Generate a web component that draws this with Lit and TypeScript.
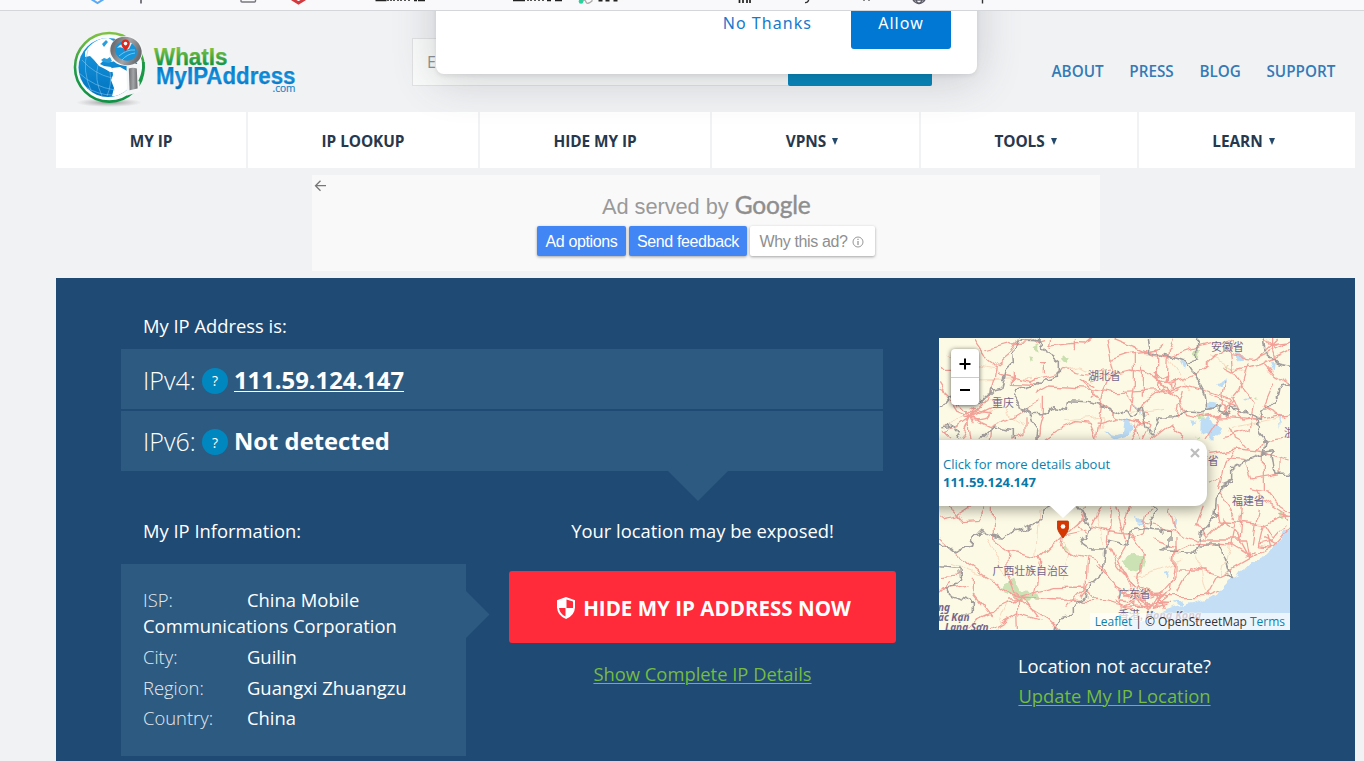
import { LitElement, html, svg, css } from "lit";
import { customElement } from "lit/decorators.js";

const sans = css`"Open Sans", "Noto Sans", sans-serif`;

@customElement("browser-strip")
class BrowserStrip extends LitElement {
  static styles = css`
    :host { display: block; height: 10px; background: #f9f9fb; border-bottom: 1px solid #d5d6d9; position: relative; z-index: 5; }
    svg { display: block; }
  `;
  render() {
    return html`<svg width="1364" height="10" viewBox="0 0 1364 10" fill="none">
      <path d="M91-1l6.500 4 6.500-4" stroke="#5aa9f5" stroke-width="2" />
      <path d="M141 0v3.500" stroke="#5b5b66" stroke-width="1.600" />
      <path d="M241-3v4q0 1 1 1h12.500q1 0 1-1v-4" stroke="#77777f" stroke-width="1.400" />
      <path d="M292-1l6.500 4 6.500-4" stroke="#d23a3f" stroke-width="3" />
      <path d="M375.500 .5h11M388 0v1m3-1v1m3-1v1m4-1v1m3-1v1m4-1v1m4-1v1M414 .5h3m1 0h7" stroke="#222" stroke-width="1.500" />
      <path d="M513 .5h12M528 0v1m3-1v1m4-1v1m4-1v1m4-1v1M547 .5h4m4 0h7" stroke="#222" stroke-width="1.500" />
      <circle cx="581" cy="1.500" r="2.300" fill="#23d59b" />
      <path d="M583 1q2-2 3 1t6-1V-1" stroke="#aaa" stroke-width="1.300" />
      <path d="M598.500 .5h4m3 0h4m4 0h4" stroke="#222" stroke-width="1.800" />
      <path d="M739.500 0v3M743 0v3M747 0v3M750 0v3" stroke="#222" stroke-width="1.700" />
      <path d="M809-1q-1 4-4 3.500" stroke="#333" stroke-width="1.300" />
      <path d="M864 0v1m5-1v1" stroke="#444" stroke-width="1.200" />
      <g stroke="#5b5b66" stroke-width="1.400"><circle cx="919" cy="-3" r="6.500" /><ellipse cx="919" cy="-3" rx="3" ry="6.500" /><path d="M913 0h12" /></g>
      <path d="M982.500 0v3.500" stroke="#333" stroke-width="1.400" />
    </svg>`;
  }
}

@customElement("site-logo")
class SiteLogo extends LitElement {
  static styles = css`:host { display: block; } svg { display: block; }`;
  render() {
    return html`<svg width="230" height="80" viewBox="70 28 230 80">
      <defs>
        <linearGradient id="g" x2="0" y2="1"><stop stop-color="#7fc241" /><stop offset=".55" stop-color="#1f9a48" /><stop offset="1" stop-color="#0d9444" /></linearGradient>
        <linearGradient id="b" x2="0" y2="1"><stop stop-color="#1c9be0" /><stop offset="1" stop-color="#0073c0" /></linearGradient>
        <linearGradient id="tg" gradientUnits="userSpaceOnUse" x1="0" x2="0" y1="47" y2="65"><stop stop-color="#85c441" /><stop offset="1" stop-color="#109447" /></linearGradient>
        <linearGradient id="tb" gradientUnits="userSpaceOnUse" x1="0" x2="0" y1="66" y2="88"><stop stop-color="#0078c4" /><stop offset=".55" stop-color="#1590dc" /><stop offset="1" stop-color="#006bb8" /></linearGradient>
        <linearGradient id="m"><stop stop-color="#6e7073" /><stop offset=".5" stop-color="#a3a5a8" /><stop offset="1" stop-color="#6b6d70" /></linearGradient>
        <radialGradient id="s"><stop stop-color="#777" stop-opacity=".75" /><stop offset="1" stop-color="#999" stop-opacity="0" /></radialGradient>
        <clipPath id="c"><circle cx="108" cy="67.500" r="29.500" /></clipPath>
      </defs>
      <ellipse cx="109" cy="102.500" rx="33" ry="4.500" fill="url(#s)" />
      <circle cx="109.300" cy="67.300" r="34.300" fill="#f8fafb" stroke="url(#g)" stroke-width="2.600" />
      <circle cx="108" cy="67.500" r="29.500" fill="url(#b)" />
      <g clip-path="url(#c)">
        <path d="M85 52q7-12 22-15l8 5-2 12 2 7-4 1-8-1-3 3 4 2 7 1 3 5-4 0-5-3-6-3-5-6-4-4-5 1z" fill="#fff" />
        <path d="M112 68l8-1 7 4 8 2v14l-12 7-8 3-3-1 2-8-3-8 2-5z" fill="#fff" />
        <path d="M102 44l4-4 2 2-4 5zM101 60l3-2 3 1 3-2 2 4-3 2-5-1z" fill="#2a9ddd" />
        <g fill="none" stroke="#85c8ef" stroke-width=".7" opacity=".8"><path d="M79 73q15 14 36 17M82 60q12 14 30 18M84 86q14 9 28 9M88 50q-7 20 4 43M98 65q-4 14 4 31M110 72q2 12-3 24" /></g>
      </g>
      <path d="M126.500 64h13.500l-.5 21.500 1.500 6-14 4z" fill="#f3f5f7" />
      <path d="M143.500 62q.6 10-4 19.500" fill="none" stroke="#199847" stroke-width="2.600" />
      <ellipse cx="126" cy="51" rx="17" ry="15" fill="#f4f6f7" />
      <ellipse cx="126" cy="51" rx="13.600" ry="11.700" transform="rotate(20 126 51)" fill="#1594da" stroke="url(#m)" stroke-width="4.600" />
      <path d="M117 48q6-7 15-5l-3 6-4 1q-3-4-8-2z" fill="#d7eefb" />
      <path d="M119 56q8-7 16-6M122 60q5-6 13-7" fill="none" stroke="#8ed0f4" stroke-width=".8" />
      <path d="M128.800 68.500q4-1.500 8 0l.8 20-8 1.800z" fill="url(#m)" />
      <path d="M125.500 51.500q-4.300-5.500-4.300-7.700a4.300 4.300 0 018.600 0q0 2.200-4.300 7.700z" fill="#dc2a1f" /><circle cx="125.500" cy="43.600" r="1.800" fill="#fff" />
      <g font-family="Liberation Sans, Arial, sans-serif" font-weight="700" stroke-width=".25" stroke-linejoin="round">
        <text x="154" y="65" font-size="23" textLength="73.500" lengthAdjust="spacingAndGlyphs" fill="url(#tg)" stroke="url(#tg)">WhatIs</text>
        <text x="156" y="83.700" font-size="23" textLength="139.500" lengthAdjust="spacingAndGlyphs" fill="url(#tb)" stroke="url(#tb)">MyIPAddress</text>
      </g>
      <text x="272.500" y="92" font-family="Open Sans, sans-serif" font-size="10.500" textLength="23" lengthAdjust="spacingAndGlyphs" fill="#1585c9" stroke="#1585c9" stroke-width=".2">.com</text>
    </svg>`;
  }
}

@customElement("area-map")
class AreaMap extends LitElement {
  static styles = css`
    :host { display: block; position: relative; width: 351px; height: 292px; overflow: hidden; background: #fcfae4; font-family: ${sans}; }
    .tiles { display: block; }
    .zoom { position: absolute; left: 12px; top: 11px; width: 28px; border-radius: 4px; background: #fff; box-shadow: 0 1px 5px rgba(0,0,0,.65); }
    .zoom span { display: flex; align-items: center; justify-content: center; height: 28px; padding-top: 1px; box-sizing: border-box; }
    .zoom span + span { height: 28px; padding: 0 0 3px; border-top: 1px solid #ccc; }
    .pop { position: absolute; left: -16px; top: 102px; width: 284px; height: 66px; box-sizing: border-box; padding: 14.500px 20px 0; border-radius: 12px; background: #fff; box-shadow: 0 3px 14px rgba(0,0,0,.4); color: #0b7fae; font-size: 13px; line-height: 18px; letter-spacing: .01px; }
    .pop b { display: block; color: #0679aa; letter-spacing: 0; }
    .tip { position: absolute; left: 107px; top: 167px; }
    .x { position: absolute; left: 251px; top: 110px; }
    .pin { position: absolute; left: 117px; top: 182px; }
    .credit { position: absolute; right: 0; bottom: 0; height: 17px; width: 200px; box-sizing: border-box; text-align: right; padding-right: 5px; background: rgba(255,255,255,.7); font-size: 12px; line-height: 17px; letter-spacing: -.02px; color: #333; white-space: nowrap; }
    .credit i { font-style: normal; color: #0d80ac; }
  `;
  render() {
    const topRoads = [
      "M28 118H60M130 25L166 80 196 105 190 150 172 215 122 262M200 102L240 68 262 25M168 60L240 40M196 120L208 128M200 130L300 155 380 132 400 118 470 132 540 120",
      "M345 25L300 38 240 42M355 50L420 40 470 42 490 25M528 25L540 90 548 125 520 190 510 255 500 320M548 25L660 70 720 78 800 52 905 25M538 92L610 68 680 60 702 40M610 68V170L600 245",
      "M480 150L600 120 650 128 698 170 M320 190L360 168 480 175 560 188 690 182 760 160 830 180 900 205M340 200V250L322 330M480 175L520 225 560 260 620 275 660 275M680 80V150L700 170 M675 60L685 160",
      "M735 25L715 65 712 150M700 170L740 200 765 250 820 262M700 170L640 215 620 250M712 160L800 130 880 60 905 25M910 25L905 80 912 128 945 180 975 215 960 300 880 322M880 108L912 125 1000 100 1082 58",
      "M905 80L970 88 1080 35M1025 25V60L1040 100M1000 25L1020 48 985 80M1025 45L1080 38M900 205L850 290 825 330M905 200L935 270 1010 262 1080 250M885 150L870 220 900 260 985 268M820 262L880 255M820 262L900 260",
      "M28 160L80 245 122 262 180 290 255 255 330 210M50 185L110 245 120 330M122 262L70 300 28 310M122 262L90 330M122 262L190 230 180 210M125 240L186 250M130 270Q188 270 180 245M285 262V310L250 325M80 230L70 200 28 180",
      "M345 325L380 300 440 275 480 280 500 330M500 280L560 262M600 330L640 270 660 285 640 330M620 280L630 330M660 330L720 285 765 325M835 370L920 360 985 365 1000 330 1080 320M865 480L885 400 915 365M870 440L840 460M890 380L940 385 960 450 1050 435M900 290L910 330 960 360M1000 370V480M985 365L1082 390M1050 380V435",
      "M700 170m-18 0a18 14 0 1036 0a18 14 0 10-36 0M690 150l-15-15 20 10 18-10-5 20 25-5-10 18 22 5-28 8",
      "M110 240l20 40M95 260l50 10M138 238l-30 40M105 250h40M480 175l-30-28 40 20M490 180l-10 20M1010 30l25 25M1010 60l30-30M1012 45h30",
      "M330 98H345M340 98V130M430 25V55M250 120V160L330 165M365 25L360 60M955 100L930 180 880 240M1000 100L1035 140 1080 165M760 180L740 260M580 180L620 240 660 250M28 300L60 330M180 290L175 330M640 110V200M1030 160L1000 230 1060 260M840 190L915 230",
    ];
    const lowRoads = [
      "M28 115L80 105 120 80M60 78L100 122 150 118 170 80M28 180L120 255 220 330 262 350M190 80L190 180 235 212 230 260 262 350M235 212L330 232 400 165 470 100M330 232L335 250 310 350M400 165L395 200 440 225 500 240 540 300",
      "M400 165L470 150M470 235L465 320 410 380M262 350L380 360 520 362 600 378 660 380M262 360L150 410 120 450M262 360L265 450M262 360L350 415 390 450M262 350L370 320 465 318 500 355M220 330L280 355 320 410M180 450L265 400 330 420",
      "M515 80L485 140 520 150 600 160 640 220 625 320 660 380M545 80L535 190 560 250 615 325M560 80L590 180 560 230 610 325M600 80L580 150M660 80L640 160 600 175M670 180L735 200 735 290 690 340M500 255L560 320 660 380M570 260L600 320",
      "M640 130L720 150 800 180 950 180 960 235M735 220L720 330 690 350M735 165L735 220L800 190 910 195 960 225M600 325L570 350 580 380M620 320L710 350 820 350 870 330M830 345L860 290 900 270 970 230 1030 200 1082 145M740 270H830M740 335L780 260 865 285",
      "M720 80L735 150M820 80L800 130 830 175M860 78L870 120 1000 135 1070 105M880 110L920 160 960 235M940 80L930 180M985 85L970 190M1000 135L985 200 1020 205M1000 130L1030 180 1060 145M1045 100L1082 110M860 30L920 120 905 200M980 25L1000 60 1070 105M880 120L830 170M960 20L1010 30 1050 80 1082 100",
      "M585 345L700 335M575 360L720 370M590 375L700 330M620 320L610 380M640 320L655 395M570 330L650 385 710 340M700 330L670 385 710 375M680 340l20 50M690 335l-35 55M560 360l50 30M600 340L690 385M720 345l-40 30 30-5M250 350l25 20M245 370l30-20M240 360h35",
      "M1000 175l40 20M1010 165l10 45M985 195l45-10M1060 95l10 30M950 230l30-15M28 290L95 285M60 310L20 345M130 290V345L180 410M28 330L110 315M450 350L480 300M470 80L440 130 470 160",
    ];
    const topBorders = "M28 235L55 200 100 210 155 215 190 180 215 175 230 120 250 100 248 70 270 30 325 32 350 70 385 95 385 142 335 152 300 170 262 182 255 205 270 235 295 240 305 270 325 295 320 330M265 232L295 250 350 252 372 230 412 238 415 212 470 215 535 235 555 255 590 238 605 262 640 232 650 290 662 310 690 262 740 260 760 240 815 242 870 225 865 250 895 255 905 228 980 260 985 290 1005 335 1000 370 940 395 905 415 905 450 870 465M655 25L660 70 740 85 770 95 805 150 825 190 830 235M985 265L1045 200 1050 170 1082 160M800 25V90L770 98M1082 110L1040 100 1005 65 1000 25M1000 370L1025 365 1035 430 1082 430M28 290L70 285 90 325M190 290L250 300 250 330M150 330L195 290";
    const lowBorders = "M28 185L68 215 125 195 130 175 158 145 175 165 215 175 250 145 270 155 330 120 350 80M28 260L90 265 92 300 50 330 60 345 130 365 130 400 90 410M375 450L385 415 430 405 430 380 470 360 480 310 520 275 525 210 485 210 450 185 480 145 460 100 445 80M525 210L540 180 595 190 600 155 645 145 720 155 720 195 690 215 800 220 815 160 855 110 860 40 905 0M665 80L685 90 660 120 670 150M810 195L870 195 905 300 885 290";
    return html`
      <svg class="tiles" width="351" height="292" viewBox="0 0 351 292" fill="none" stroke-linejoin="round">
        <defs>
          <filter id="wander" x="-5%" y="-5%" width="110%" height="110%"><feTurbulence type="fractalNoise" baseFrequency=".02" numOctaves="2" seed="4" /><feDisplacementMap in="SourceGraphic" scale="32" xChannelSelector="R" yChannelSelector="G" /></filter>
          <filter id="rough" x="-5%" y="-5%" width="110%" height="110%"><feTurbulence type="fractalNoise" baseFrequency=".035" numOctaves="2" seed="9" /><feDisplacementMap in="SourceGraphic" scale="28" xChannelSelector="R" yChannelSelector="G" /></filter>
        </defs>
        <g transform="scale(.33333) translate(-27 -24)">
          <g fill="#bddcf5" filter="url(#rough)">
            <path d="M812 278l20-22 12 22 28 8 4 18-30 22-15-20-20 5zM910 75l18-8 25 20-22 12zM525 310l30 5 25-5 8-40 15 5-6 40-44 13zM845 215l15 5-12 20-20-8zM750 90l20 10-5 20zM865 160l30-15-20 30zM780 270l20 5-10 10zM1020 95l14 2-3 25zM610 230l28 10-5 15zM1040 260l12-6-5 35zM940 210l30-10-4 12z" />
          </g>
          <g fill="#c9dfae" filter="url(#rough)"><path d="M390 85l25-8 3 15-20 10zM310 50l15-8v22l-12-3zM785 65l25-5-3 22-18-4zM885 110l14-6-2 18zM812 250l12-8-4 30-12 2zM295 82l12 3-8 10zM795 320l12 2-3 8zM975 208l10-5v14z" /></g>
          <g filter="url(#wander)">
            <g stroke="#f8d9c0" stroke-width="3"><path d="M50 80L200 115M140 150L310 145M400 120L440 110 540 145M840 80L950 130M600 250L710 235M400 275L520 260 510 300M720 80L780 180M40 280L210 235 280 280M890 300L1060 260" /></g>
            <g stroke="#f3a098" stroke-width="3.800">${topRoads.map((d) => svg`<path d=${d} />`)}</g>
          </g>
          <path d=${topBorders} stroke="#a19c9c" stroke-width="4.600" filter="url(#rough)" />
        </g>
        <g transform="scale(.33333) translate(-27 426)">
          <path d="M1100 135L1062 150 1055 175 1030 200 1005 225 990 240 965 240 940 265 925 285 905 295 880 320 865 345 835 355 790 368 735 378 700 390 680 405 655 395 640 420 590 420 575 470H1100z" fill="#c4def6" filter="url(#rough)" />
          <path d="M1040 240h50v220H700v-40h200z" fill="#c4def6" />
          <g fill="#bddcf5" filter="url(#rough)"><path d="M618 110l18 12-12 15zM700 280l20-6-8 16zM730 105l14 20-12 15zM730 365l30-8-8 18z" /></g>
          <g fill="#cbe2b5" filter="url(#rough)"><path d="M575 240l25-18 52 8-15 40-25 12-30-18zM220 315l30-20 20 35 55 5 5 18-65 10-45-30zM1045 95l22 5-10 25zM405 190l18 15-18 2z" /></g>
          <g filter="url(#wander)">
            <g stroke="#f8d9c0" stroke-width="3"><path d="M330 90L320 230M170 180L230 290M400 180L420 210 400 300M800 230L830 350M620 290L760 240M230 380L200 450M500 100L530 230M900 190L870 290M60 250L190 300" /></g>
            <g stroke="#f3a098" stroke-width="3.800">${lowRoads.map((d) => svg`<path d=${d} />`)}</g>
          </g>
          <path d=${lowBorders} stroke="#a19c9c" stroke-width="4.600" filter="url(#rough)" />
        </g>
        <g font-family="Noto Sans CJK SC, sans-serif" font-size="10.900" fill="#75658a" stroke="#fcfae4" stroke-opacity=".5" stroke-width="1.500" paint-order="stroke">
          <text x="272" y="13">安徽省</text><text x="149" y="42">湖北省</text><text x="53" y="69">重庆</text><text x="247" y="127">江西省</text><text x="293" y="167">福建省</text><text x="345" y="99">浙江省</text>
          <text x="53.500" y="237">广西壮族自治区</text><text x="179" y="260">广东省</text>
          <text x="179" y="281">香港, <tspan font-family="Noto Sans, sans-serif" font-style="italic" font-weight="700">Hong Kong</tspan></text>
          <g font-family="Noto Sans, sans-serif" font-style="italic" font-weight="700" font-size="10"><text x="-1" y="273">ng</text><text x="-1" y="283">ắc Kạn</text><text x="6" y="292.500">Lạng Sơn</text></g>
        </g>
      </svg>
      <div class="zoom">
        <span><svg width="12" height="12"><path d="M6 .5v11M.5 6h11" stroke="#000" stroke-width="2" /></svg></span>
        <span><svg width="12" height="12"><path d="M1 6h10" stroke="#000" stroke-width="2" /></svg></span>
      </div>
      <div class="pop">Click for more details about<b>111.59.124.147</b></div>
      <svg class="tip" width="34" height="14"><path d="M3 0h28L17 13z" fill="#fff" /></svg>
      <svg class="x" width="10" height="10"><path d="M1 1l8 8M9 1L1 9" stroke="#bdbdbd" stroke-width="2.200" /></svg>
      <svg class="pin" width="14" height="20" viewBox="0 0 14 20"><path d="M1.500 1h10q1 0 1 1v6q0 3-5.500 10Q1.500 11 1.500 8z" fill="#d63600" stroke="#b82e00" stroke-width=".8" /><circle cx="7" cy="6.500" r="2.300" fill="#fff" /></svg>
      <div class="credit"><i>Leaflet</i> | © OpenStreetMap <i>Terms</i></div>`;
  }
}

@customElement("app-root")
class AppRoot extends LitElement {
  static styles = css`
    :host { display: block; position: relative; width: 1364px; height: 761px; overflow: hidden; background: #f1f2f4; font-family: ${sans}; color: #fff; white-space: nowrap; }
    header { height: 101px; display: flex; align-items: flex-start; box-sizing: border-box; padding-left: 70px; }
    site-logo { margin-top: 17px; }
    .search { margin: 27px 0 0 112px; width: 520px; height: 48px; display: flex; box-sizing: border-box; border: 1px solid #e1e2e3; background: #fafbfa; color: #8d9196; font-size: 16px; line-height: 46px; }
    .search span { flex: 1; padding-left: 14px; }
    .search i { width: 144px; margin: -1px; background: #0084b9; border-radius: 2px; }
    .links { display: flex; gap: 25.700px; margin: 49px 0 0 119.500px; font-size: 15.250px; font-weight: 600; line-height: 22px; color: #337ab7; }
    nav { margin-left: 56px; display: grid; grid-template-columns: 190px 230px 230px 207px 216px 216px; gap: 2px; height: 56px; }
    nav div { background: #fff; display: flex; align-items: center; justify-content: center; gap: 6px; color: #27384c; font-size: 15.400px; font-weight: 700; letter-spacing: -.07px; padding-top: 3px; box-sizing: border-box; }
    nav svg { margin: -1px 7px 0 0; }
    .ad { margin: 7px 0 0 312px; width: 788px; height: 96px; display: flex; background: #f9f9f9; font-family: "Liberation Sans", Arial, sans-serif; }
    .back { margin: 5px 0 0 2px; width: 223px; }
    .adtext { font-size: 21.800px; color: #999; line-height: 26px; height: 26px; margin: 17px 0 0 65px; letter-spacing: -.05px; }
    .adtext b { font-family: Lato, sans-serif; font-size: 24.500px; font-weight: 400; color: #8e8e8e; -webkit-text-stroke: .4px #8e8e8e; letter-spacing: -.15px; }
    .btns { display: flex; gap: 3px; letter-spacing: -.37px; margin-top: 8px; }
    .btns span { height: 30px; line-height: 28px; padding-top: 1px; box-sizing: border-box; border-radius: 2px; background: #4285f4; font-size: 16px; box-shadow: 0 1px 3px rgba(0,0,0,.35); display: flex; justify-content: center; align-items: center; width: 89px; }
    .btns .fb { width: 118px; } .btns .why { width: 125px; background: #fff; color: #8f8f8f; gap: 4px; padding-right: 2px; }
    .panel { margin: 7px 0 0 56px; width: 1299px; height: 483px; background: #1f4a73; display: grid; grid-template-columns: 775px 351px; column-gap: 43px; padding: 0 65px; box-sizing: border-box; font-size: 18.370px; }
    .title { line-height: 26px; padding: 35px 0 0 22px; height: 36px; font-size: 18.370px; }
    .row { width: 762px; height: 60px; background: #2d5a80; display: flex; align-items: center; padding: 1px 0 0 22px; box-sizing: border-box; font-size: 25px; }
    .row + .row { margin-top: 2px; height: 60px; padding-top: 0; }
    .row .k { width: 59px; font-size: 25px; font-weight: 330; }
    .q { width: 26px; height: 26px; margin-top: 2px; border-radius: 50%; background: #0087bf; font-size: 14px; display: flex; align-items: center; justify-content: center; margin-right: 6px; }
    .row b { font-size: 23.800px; }
    .ip { text-decoration: underline; text-decoration-thickness: 1px; text-underline-offset: 2px; }
    .down { display: block; margin-left: 547px; }
    .lower { display: grid; grid-template-columns: 345px 387px; column-gap: 43px; margin-top: 17px; }
    .sub { line-height: 26px; height: 46px; }
    .sub.l { padding-left: 22px; }
    .info { height: 192px; background: #2d5a80; padding: 23px 22px 0; box-sizing: border-box; position: relative; line-height: 26px; font-size: 18.400px; }
    .info p { margin: 0 0 4.500px; }
    .info p:first-child { margin-bottom: 5px; }
    .info em { display: inline-block; width: 104px; font-style: normal; font-weight: 300; color: #e3eaf0; }
    .point { position: absolute; left: 345px; top: 27px; }
    .mid { text-align: center; }
    .cta { box-sizing: border-box; margin-top: 7px; height: 72px; border-radius: 3px; background: #ff2a3a; display: flex; align-items: center; justify-content: center; gap: 7px; font-weight: 700; font-size: 20.550px; padding: 1px 0 0 2px; }
    .green { color: #76bb43; text-decoration: underline; text-decoration-thickness: 1px; text-underline-offset: 2px; }
    .cta + .green { display: block; margin-top: 18px; line-height: 26px; }
    .side { padding-top: 60px; text-align: center; line-height: 26px; }
    .side area-map { text-align: left; line-height: normal; margin-bottom: 23px; }
    .side .acc { margin-bottom: 4px; }
    .dialog { position: absolute; z-index: 3; left: 435.500px; top: -60px; width: 541.500px; height: 134px; border-radius: 8px; background: #fff; box-shadow: 0 2px 4px rgba(0,0,0,.08), 0 6px 44px rgba(70,80,90,.24); box-sizing: border-box; padding: 60px 26px 0 0; display: flex; justify-content: flex-end; font-family: "Noto Sans", "Open Sans", sans-serif; font-size: 16px; letter-spacing: 1.050px; line-height: 46px; }
    .dialog .no { color: #1779cc; margin-right: 39px; }
    .dialog .yes { width: 100px; height: 48.500px; border-radius: 3px; background: #0078d4; text-align: center; }
  `;
  render() {
    const menu: [string, boolean][] = [["MY IP", false], ["IP LOOKUP", false], ["HIDE MY IP", false], ["VPNS", true], ["TOOLS", true], ["LEARN", true]];
    return html`
      <browser-strip></browser-strip>
      <header>
        <site-logo></site-logo>
        <div class="search"><span>E</span><i></i></div>
        <div class="links"><span>ABOUT</span><span>PRESS</span><span>BLOG</span><span>SUPPORT</span></div>
      </header>
      <div class="dialog"><span class="no">No Thanks</span><span class="yes">Allow</span></div>
      <nav>${menu.map(([t, more]) => html`<div>${t}${more ? html`<svg width="6" height="7"><path d="M0 0h6L3 7z" fill="#24496b" /></svg>` : ""}</div>`)}</nav>
      <div class="ad">
        <svg class="back" height="12" viewBox="0 0 223 12"><path d="M12 5.700H1.500M6.500 .7l-5 5 5 5" fill="none" stroke="#777" stroke-width="1.300" /></svg>
        <div>
          <div class="adtext">Ad served by <b>Google</b></div>
          <div class="btns"><span>Ad options</span><span class="fb">Send feedback</span><span class="why">Why this ad? <svg width="12" height="12" viewBox="0 0 12 12"><circle cx="6" cy="6" r="5" fill="none" stroke="#999" /><path d="M6 5v4M6 2.800v1.300" stroke="#999" stroke-width="1.300" /></svg></span></div>
        </div>
      </div>
      <div class="panel">
        <div>
          <div class="title">My IP Address is:</div>
          <div class="row"><span class="k">IPv4:</span><span class="q">?</span><b class="ip">111.59.124.147</b></div>
          <div class="row"><span class="k">IPv6:</span><span class="q">?</span><b>Not detected</b></div>
          <svg class="down" width="60" height="30"><path d="M0 0h60L30 30z" fill="#2d5a80" /></svg>
          <div class="lower">
            <div>
              <div class="sub l">My IP Information:</div>
              <div class="info">
                <p><em>ISP:</em>China Mobile<br />Communications Corporation</p>
                <p><em>City:</em>Guilin</p>
                <p><em>Region:</em>Guangxi Zhuangzu</p>
                <p><em>Country:</em>China</p>
                <svg class="point" width="24" height="47"><path d="M0 0l23.500 23.500L0 47z" fill="#2d5a80" /></svg>
              </div>
            </div>
            <div class="mid">
              <div class="sub">Your location may be exposed!</div>
              <div class="cta"><svg width="20" height="24" viewBox="0 0 20 24"><path d="M10 1L1 4.300v7.200Q1.400 19.500 10 23q8.600-3.500 9-11.500V4.300z" fill="#fff" /><path d="M10.500 3.500V12H17V5.600zM9.500 12H3q.7 5.500 6.500 8.600z" fill="#ff2a3a" /></svg><span>HIDE MY IP ADDRESS NOW</span></div>
              <span class="green">Show Complete IP Details</span>
            </div>
          </div>
        </div>
        <div class="side">
          <area-map></area-map>
          <div class="acc">Location not accurate?</div>
          <span class="green">Update My IP Location</span>
        </div>
      </div>`;
  }
}
